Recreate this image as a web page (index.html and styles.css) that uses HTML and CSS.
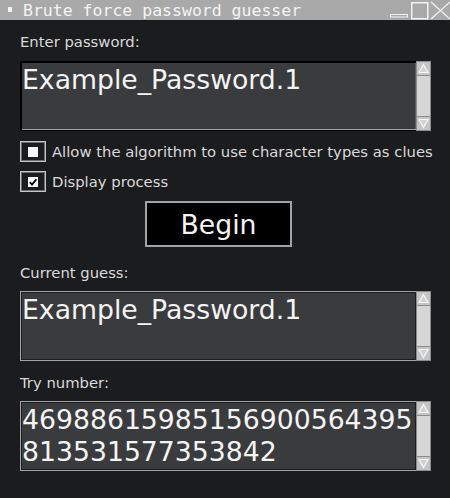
FILE: index.html
```html
<!DOCTYPE html>
<html>
<head>
<meta charset="utf-8">
<link rel="stylesheet" href="styles.css">
</head>
<body>
<div class="window">
  <div class="titlebar">
    <span class="bullet"></span>
    <span class="title">Brute force password guesser</span>
    <svg class="winbtns" width="61" height="20" viewBox="0 0 61 20">
      <rect x="1.5" y="14.5" width="17" height="2.5" fill="none" stroke="#f2f2f2" stroke-width="1"/>
      <rect x="22.75" y="2.75" width="16" height="16" fill="none" stroke="#f2f2f2" stroke-width="1.5"/>
      <path d="M42 2 L61 19 M61 2 L42 19" stroke="#f2f2f2" stroke-width="1.3" fill="none"/>
    </svg>
  </div>
  <div class="content">
    <div class="label l-first">Enter password:</div>
    <div class="field">
      <div class="text text-active">Example_Password.1</div>
      <div class="sb">
        <div class="sb-btn sb-up"><svg width="13" height="13" viewBox="0 0 13 13"><polygon points="6.5,2.5 11,10.5 2,10.5" fill="#d2d2d2" stroke="#f6f6f6" stroke-width="1.2"/></svg></div>
        <div class="sb-track"></div>
        <div class="sb-btn sb-down"><svg width="13" height="13" viewBox="0 0 13 13"><polygon points="2,2.5 11,2.5 6.5,10.5" fill="#d2d2d2" stroke="#f6f6f6" stroke-width="1.2"/></svg></div>
      </div>
    </div>
    <div class="check-row cr-first">
      <span class="cb"><span class="cb-inner"></span></span>
      <span class="cb-label">Allow the algorithm to use character types as clues</span>
    </div>
    <div class="check-row cr-second">
      <span class="cb"><span class="cb-inner"><svg width="10" height="10" viewBox="0 0 10 10"><path d="M1.8 5.2 L4 7.6 L8.4 2.2" fill="none" stroke="#000" stroke-width="1.8"/></svg></span></span>
      <span class="cb-label">Display process</span>
    </div>
    <div class="btn">Begin</div>
    <div class="label l-guess">Current guess:</div>
    <div class="field">
      <div class="text">Example_Password.1</div>
      <div class="sb">
        <div class="sb-btn sb-up"><svg width="13" height="13" viewBox="0 0 13 13"><polygon points="6.5,2.5 11,10.5 2,10.5" fill="#d2d2d2" stroke="#f6f6f6" stroke-width="1.2"/></svg></div>
        <div class="sb-track"></div>
        <div class="sb-btn sb-down"><svg width="13" height="13" viewBox="0 0 13 13"><polygon points="2,2.5 11,2.5 6.5,10.5" fill="#d2d2d2" stroke="#f6f6f6" stroke-width="1.2"/></svg></div>
      </div>
    </div>
    <div class="label l-try">Try number:</div>
    <div class="field">
      <div class="text">46988615985156900564395<br>813531577353842</div>
      <div class="sb">
        <div class="sb-btn sb-up"><svg width="13" height="13" viewBox="0 0 13 13"><polygon points="6.5,2.5 11,10.5 2,10.5" fill="#d2d2d2" stroke="#f6f6f6" stroke-width="1.2"/></svg></div>
        <div class="sb-track"></div>
        <div class="sb-btn sb-down"><svg width="13" height="13" viewBox="0 0 13 13"><polygon points="2,2.5 11,2.5 6.5,10.5" fill="#d2d2d2" stroke="#f6f6f6" stroke-width="1.2"/></svg></div>
      </div>
    </div>
  </div>
</div>
</body>
</html>
```
FILE: styles.css
```css
html, body {
  margin: 0;
  padding: 0;
  background: #1b1c1e;
}
.window {
  width: 450px;
  height: 498px;
  background: #1b1c1e;
  font-family: "DejaVu Sans", sans-serif;
  overflow: hidden;
}
.titlebar {
  height: 20px;
  background: #a9a9a9;
  display: flex;
  align-items: flex-start;
}
.bullet {
  width: 4px;
  height: 5px;
  background: #f4f4f4;
  margin: 7px 11px 0 8px;
  flex: none;
}
.title {
  font-family: "DejaVu Sans Mono", monospace;
  font-size: 16.5px;
  line-height: 20px;
  padding-top: 1px;
  color: #f4f4f4;
  white-space: nowrap;
}
.winbtns {
  margin-left: auto;
  display: block;
}
.content {
  padding: 0 19px 0 20px;
  display: flex;
  flex-direction: column;
}
.label {
  font-size: 14.8px;
  line-height: 18px;
  color: #dadada;
  margin-bottom: 10px;
}
.l-first { margin-top: 13px; }
.l-guess { margin-top: 17px; margin-bottom: 9px; }
.l-try { margin-top: 13px; margin-bottom: 9px; }
.field {
  display: flex;
  height: 70px;
}
.text {
  flex: 1;
  background: #3a3b3d;
  border: 1px solid #a3a3a3;
  box-shadow: inset 1px 1px 0 #1e1e1e, inset -1px -1px 0 #1e1e1e;
  border-right: none;
  color: #f4f4f4;
  font-size: 26.7px;
  line-height: 32px;
  padding: 2px 0 0 1px;
  white-space: nowrap;
  overflow: hidden;
}
.text-active {
  border-top: 2px solid #000;
  border-left: 2px solid #000;
  border-bottom: 1px solid #000;
  box-shadow: inset 0 -1px 0 #a0a0a0, inset -1px 0 0 #5c5c5c;
  padding: 1px 0 0 0;
}
.sb {
  width: 15px;
  flex: none;
  box-sizing: border-box;
  border: 1px solid #8c8c8c;
  background: #d6d6d6;
  display: flex;
  flex-direction: column;
}
.sb-btn {
  height: 13px;
  background: #c4c4c4;
  flex: none;
  display: flex;
  justify-content: center;
}
.sb-btn svg { display: block; }
.sb-up { border-bottom: 1px solid #8c8c8c; }
.sb-down { border-top: 1px solid #8c8c8c; }
.sb-track { flex: 1; }
.check-row {
  display: flex;
  align-items: center;
  height: 21px;
}
.cr-first { margin-top: 10px; }
.cr-second { margin-top: 9px; }
.cb {
  width: 26px;
  height: 21px;
  box-sizing: border-box;
  border: 1px solid #c6c6c6;
  box-shadow: inset 0 0 0 1px #6e6e6e;
  display: flex;
  align-items: center;
  justify-content: center;
  flex: none;
}
.cb-inner {
  width: 10px;
  height: 10px;
  background: #f6f6f6;
  display: block;
}
.cb-inner svg { display: block; }
.cb-label {
  margin-left: 6px;
  font-size: 14.8px;
  color: #dadada;
  white-space: nowrap;
}
.btn {
  margin-top: 9px;
  margin-left: 125px;
  align-self: flex-start;
  width: 147px;
  height: 46px;
  box-sizing: border-box;
  border: 2px solid #a2a2a2;
  background: #000;
  color: #f4f4f4;
  font-size: 26.7px;
  display: flex;
  align-items: center;
  justify-content: center;
}
```
